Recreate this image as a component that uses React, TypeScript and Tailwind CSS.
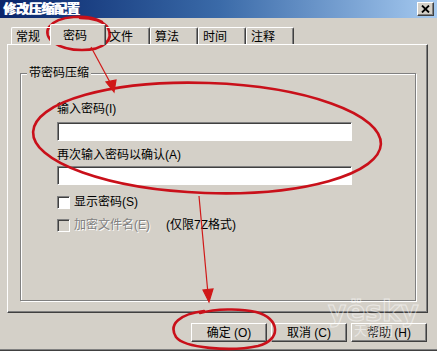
import React from 'react';

const raised =
  'border border-t-white border-l-white border-r-[#404040] border-b-[#404040] shadow-[inset_-1px_-1px_0_#808080]';
const sunken =
  'border border-t-[#808080] border-l-[#808080] border-r-white border-b-white shadow-[inset_1px_1px_0_#404040]';

const tabs = [
  { label: '常规', w: 'w-[41px]' },
  { label: '密码', w: 'w-[56px]', active: true },
  { label: '文件', w: 'w-[46px]' },
  { label: '算法', w: 'w-[48px]' },
  { label: '时间', w: 'w-[48px]' },
  { label: '注释', w: 'w-[48px]' },
];

const Annotations: React.FC = () => (
  <svg className="absolute inset-0 pointer-events-none" width={437} height={351} viewBox="0 0 437 351">
    <g fill="none" stroke="#c9101a" strokeWidth={2.6} strokeLinecap="round">
      <path d="M102 22 C 88 14, 58 15, 49 27 C 42 38, 58 50, 82 50 C 104 50, 114 40, 108 28 C 104 21, 92 18, 80 18" />
      <ellipse cx={207} cy={138} rx={174} ry={55} transform="rotate(2 207 138)" />
      <path d="M204 311 C 180 314, 168 324, 176 337 C 184 348, 230 352, 258 346 C 282 340, 280 318, 256 312 C 240 308, 215 309, 200 313" />
    </g>
    <g stroke="#d01818" strokeWidth={1.2} fill="#d01818">
      <line x1={91} y1={47} x2={112} y2={86} />
      <polygon points="114,92 106,82 116,80" />
      <line x1={199} y1={196} x2={208} y2={294} />
      <polygon points="209,302 203,290 213,289" />
    </g>
  </svg>
);

const App: React.FC = () => {
  return (
    <div className="relative w-[437px] h-[351px] overflow-hidden bg-[#d4d0c8] text-[12px] leading-[14px] text-black font-['Liberation_Sans','Noto_Sans_CJK_SC',sans-serif]">
      {/* title bar */}
      <div className="h-[18px] flex items-center justify-between pl-[3px] pr-[3px] bg-gradient-to-r from-[#0a246a] via-[#3a6aa8] to-[#a6caf0]">
        <span className="text-white font-bold text-[13px] leading-[16px] tracking-[-0.3px] [text-shadow:1px_0_0_#fff]">修改压缩配置</span>
        <div className={`w-[17px] h-[14px] bg-[#d4d0c8] flex items-center justify-center ${raised}`}>
          <svg width="9" height="8" viewBox="0 0 9 8">
            <path d="M1 0.5 L8 7.5 M8 0.5 L1 7.5" stroke="#000" strokeWidth="1.8" />
          </svg>
        </div>
      </div>

      {/* tabs */}
      <div className="mt-[6px] ml-[7px] w-[421px]">
        <div className="flex items-end h-[20px] pl-[4px] relative z-10">
          {tabs.map((t) =>
            t.active ? (
              <div
                key={t.label}
                className={`${t.w} -mx-[2px] h-[21px] -mb-[1px] bg-[#d4d0c8] border-t border-l border-white border-r border-r-[#404040] rounded-t-[2px] pl-[12px] pt-[4px] shadow-[inset_-1px_0_0_#808080] relative z-20`}
              >
                {t.label}
              </div>
            ) : (
              <div
                key={t.label}
                className={`${t.w} h-[17px] border-t border-l border-white border-r border-r-[#404040] rounded-t-[2px] pl-[4px] pt-[2px] shadow-[inset_-1px_0_0_#808080]`}
              >
                {t.label}
              </div>
            )
          )}
        </div>

        {/* tab page */}
        <div className="h-[269px] border border-t-white border-l-white border-r-[#404040] border-b-[#404040] shadow-[inset_-1px_-1px_0_#808080] pt-[21px] pl-[12px] pr-[11px]">
          <fieldset className="h-[235px] border border-[#808080] shadow-[inset_1px_1px_0_#fff,1px_1px_0_#fff]">
            <legend className="ml-[6px] px-[2px] bg-[#d4d0c8]">带密码压缩</legend>
            <div className="pl-[36px]">
              <div className="mt-[22px]">输入密码(I)</div>
              <div className={`mt-[6px] w-[295px] h-[19px] bg-white ${sunken}`} />
              <div className="mt-[7px]">再次输入密码以确认(A)</div>
              <div className={`mt-[4px] w-[295px] h-[19px] bg-white ${sunken}`} />
              <div className="mt-[10px] flex items-center h-[14px]">
                <span className={`w-[13px] h-[13px] bg-white ${sunken}`} />
                <span className="ml-[4px]">显示密码(S)</span>
              </div>
              <div className="mt-[9px] flex items-center h-[14px] text-[#808080]">
                <span className={`w-[13px] h-[13px] bg-[#d4d0c8] ${sunken}`} />
                <span className="ml-[4px] [text-shadow:1px_1px_0_#fff]">加密文件名(E)</span>
                <span className="ml-[16px] text-black">(仅限7Z格式)</span>
              </div>
            </div>
          </fieldset>
        </div>
      </div>

      {/* buttons */}
      <div className="mt-[10px] flex justify-end gap-[4px] pr-[10px]">
        {['确定 (O)', '取消 (C)', '帮助 (H)'].map((b) => (
          <div key={b} className={`w-[76px] h-[19px] flex items-center justify-center ${raised}`}>
            {b}
          </div>
        ))}
      </div>

      {/* window bottom edge */}
      <div className="absolute left-0 right-0 bottom-0 h-[2px] border-t border-[#808080] bg-[#404040]" />

      {/* watermark */}
      <div className="absolute left-[328px] top-[298px] pointer-events-none flex flex-col items-center opacity-50">
        <span className="font-['DejaVu_Sans',sans-serif] font-bold text-[28px] leading-[28px] text-transparent [-webkit-text-stroke:1px_#ffffff]">yësky</span>
        <span className="text-[13px] leading-[14px] text-white -mt-[3px] font-['Noto_Sans_CJK_SC',sans-serif]">天极网</span>
      </div>

      <Annotations />
    </div>
  );
};

export default App;
